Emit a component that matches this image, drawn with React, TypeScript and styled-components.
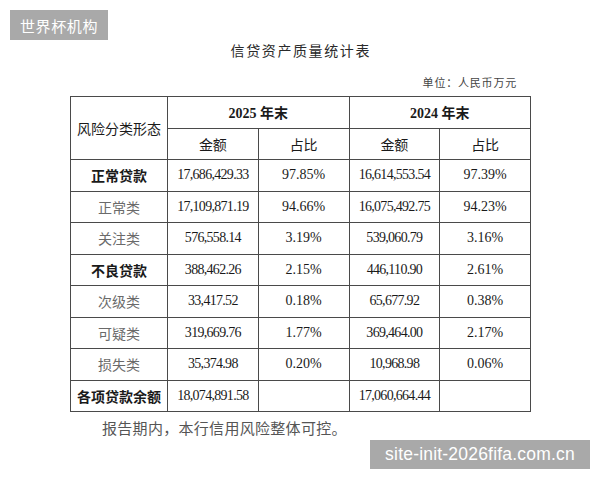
import React from "react";
import styled, { createGlobalStyle } from "styled-components";

const Global = createGlobalStyle`
  html, body { margin: 0; padding: 0; background: #ffffff; }
  body { font-family: "Liberation Serif", "Noto Sans CJK SC", serif; }
`;

const Page = styled.div`
  position: relative;
  width: 600px;
  height: 480px;
  box-sizing: border-box;
  padding-top: 40px;
  background: #ffffff;
  overflow: hidden;
`;

const Title = styled.div`
  text-align: center;
  font-family: "Noto Sans CJK SC", sans-serif;
  font-size: 14px;
  line-height: 20px;
  letter-spacing: 1.6px;
  padding-left: 1.6px;
  color: #2a2a2a;
`;

const Unit = styled.div`
  text-align: right;
  padding-right: 83px;
  margin-top: 14px;
  font-family: "Noto Sans CJK SC", sans-serif;
  font-size: 11px;
  line-height: 16px;
  letter-spacing: 0.8px;
  color: #444;
`;

const Table = styled.table`
  margin: 6px 0 0 70px;
  border-collapse: collapse;
  table-layout: fixed;
  width: 461px;
  border: 1px solid #4a4a4a;
`;

const Cell = styled.td<{ $w?: number; $kind?: "cat" | "sub" | "num" | "pct" | "head" | "year" }>`
  border: 1px solid #4a4a4a;
  height: 31.5px;
  padding: 0;
  text-align: center;
  vertical-align: middle;
  box-sizing: border-box;
  ${(p) => (p.$w ? `width: ${p.$w}px;` : "")}
  font-size: 14px;
  color: ${(p) => (p.$kind === "sub" ? "#6a6a6a" : "#1a1a1a")};
  font-weight: ${(p) => (p.$kind === "cat" || p.$kind === "year" ? 700 : 400)};
  font-family: ${(p) =>
    p.$kind === "num" || p.$kind === "pct" || p.$kind === "year"
      ? `"Liberation Serif", "Noto Sans CJK SC", serif`
      : `"Noto Sans CJK SC", sans-serif`};
  letter-spacing: ${(p) => (p.$kind === "num" ? "-0.7px" : "0")};
`;

const Footer = styled.div`
  margin-top: 6px;
  padding-left: 102px;
  font-family: "Noto Sans CJK SC", sans-serif;
  font-size: 15px;
  line-height: 20px;
  color: #555;
  letter-spacing: 0.3px;
`;

const Badge = styled.div<{ $corner: "tl" | "br" }>`
  position: absolute;
  background: #a9a9a9;
  color: #ffffff;
  display: flex;
  align-items: center;
  justify-content: center;
  ${(p) =>
    p.$corner === "tl"
      ? `left: 10px; top: 10px; width: 98px; height: 30px;
         font-family: "Noto Sans CJK SC", sans-serif; font-size: 15px; letter-spacing: 0.6px;`
      : `left: 370px; top: 440px; width: 220px; height: 29px;
         font-family: "Liberation Sans", "DejaVu Sans", sans-serif; font-size: 17.5px; letter-spacing: 0.2px;`}
`;

type Row = { name: string; kind: "cat" | "sub"; a: string; ap: string; b: string; bp: string };

const rows: Row[] = [
  { name: "正常贷款", kind: "cat", a: "17,686,429.33", ap: "97.85%", b: "16,614,553.54", bp: "97.39%" },
  { name: "正常类", kind: "sub", a: "17,109,871.19", ap: "94.66%", b: "16,075,492.75", bp: "94.23%" },
  { name: "关注类", kind: "sub", a: "576,558.14", ap: "3.19%", b: "539,060.79", bp: "3.16%" },
  { name: "不良贷款", kind: "cat", a: "388,462.26", ap: "2.15%", b: "446,110.90", bp: "2.61%" },
  { name: "次级类", kind: "sub", a: "33,417.52", ap: "0.18%", b: "65,677.92", bp: "0.38%" },
  { name: "可疑类", kind: "sub", a: "319,669.76", ap: "1.77%", b: "369,464.00", bp: "2.17%" },
  { name: "损失类", kind: "sub", a: "35,374.98", ap: "0.20%", b: "10,968.98", bp: "0.06%" },
  { name: "各项贷款余额", kind: "cat", a: "18,074,891.58", ap: "", b: "17,060,664.44", bp: "" },
];

export default function App() {
  return (
    <>
      <Global />
      <Page>
        <Title>信贷资产质量统计表</Title>
        <Unit>单位：人民币万元</Unit>
        <Table>
          <tbody>
            <tr>
              <Cell rowSpan={2} $w={97} $kind="head">风险分类形态</Cell>
              <Cell colSpan={2} $kind="year">2025 年末</Cell>
              <Cell colSpan={2} $kind="year">2024 年末</Cell>
            </tr>
            <tr>
              <Cell $w={112} $kind="head">金额</Cell>
              <Cell $w={70} $kind="head">占比</Cell>
              <Cell $w={110} $kind="head">金额</Cell>
              <Cell $w={71} $kind="head">占比</Cell>
            </tr>
            {rows.map((r) => (
              <tr key={r.name}>
                <Cell $kind={r.kind}>{r.name}</Cell>
                <Cell $kind="num">{r.a}</Cell>
                <Cell $kind="pct">{r.ap}</Cell>
                <Cell $kind="num">{r.b}</Cell>
                <Cell $kind="pct">{r.bp}</Cell>
              </tr>
            ))}
          </tbody>
        </Table>
        <Footer>报告期内，本行信用风险整体可控。</Footer>
        <Badge $corner="tl">世界杯机构</Badge>
        <Badge $corner="br">site-init-2026fifa.com.cn</Badge>
      </Page>
    </>
  );
}
